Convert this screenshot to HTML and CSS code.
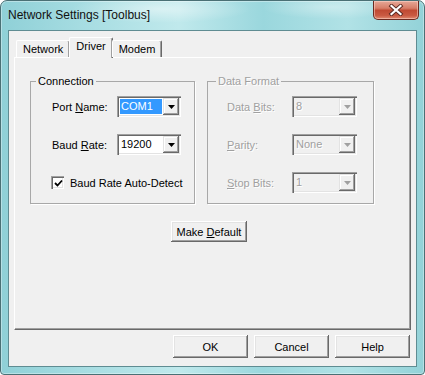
FILE: index.html
```html
<!DOCTYPE html>
<html>
<head>
<meta charset="utf-8">
<link rel="stylesheet" href="styles.css">
</head>
<body>
<div class="window">
  <div class="titlebar">
    <span class="title">Network Settings [Toolbus]</span>
    <div class="close">
      <svg width="16" height="12" viewBox="0 0 16 12"><path d="M3.5 2 L12.5 10 M12.5 2 L3.5 10" stroke="#5a2a22" stroke-width="4" stroke-linecap="square" fill="none"/><path d="M3.5 2 L12.5 10 M12.5 2 L3.5 10" stroke="#fff" stroke-width="2.2" stroke-linecap="square" fill="none"/></svg>
    </div>
  </div>
  <div class="client">
    <div class="tabstrip">
      <div class="tab">Network</div>
      <div class="tab active">Driver</div>
      <div class="tab">Modem</div>
    </div>
    <div class="panel">
      <div class="groups">
        <fieldset class="group conn">
          <legend>Connection</legend>
          <div class="rows">
            <span class="lbl">Port <u>N</u>ame:</span>
            <div class="combo"><span class="val sel">COM1</span><span class="drop"><svg width="7" height="4" viewBox="0 0 7 4"><path d="M0 0H7L3.5 4Z" fill="#000"/></svg></span></div>
            <span class="lbl">Baud <u>R</u>ate:</span>
            <div class="combo"><span class="val">19200</span><span class="drop"><svg width="7" height="4" viewBox="0 0 7 4"><path d="M0 0H7L3.5 4Z" fill="#000"/></svg></span></div>
            <label class="check">
              <span class="box"><svg width="9" height="9" viewBox="0 0 9 9"><path d="M1 4 L3.5 6.5 L8 1.5" stroke="#000" stroke-width="1.8" fill="none"/></svg></span>
              <span class="ctext">Baud Rate Auto-Detect</span>
            </label>
          </div>
        </fieldset>
        <fieldset class="group fmt disabled">
          <legend>Data Format</legend>
          <div class="rows">
            <span class="lbl">Data <u>B</u>its:</span>
            <div class="combo"><span class="val">8</span><span class="drop"><svg width="7" height="4" viewBox="0 0 7 4"><path d="M0 0H7L3.5 4Z" fill="#a0a0a0"/></svg></span></div>
            <span class="lbl"><u>P</u>arity:</span>
            <div class="combo"><span class="val">None</span><span class="drop"><svg width="7" height="4" viewBox="0 0 7 4"><path d="M0 0H7L3.5 4Z" fill="#a0a0a0"/></svg></span></div>
            <span class="lbl"><u>S</u>top Bits:</span>
            <div class="combo"><span class="val">1</span><span class="drop"><svg width="7" height="4" viewBox="0 0 7 4"><path d="M0 0H7L3.5 4Z" fill="#a0a0a0"/></svg></span></div>
          </div>
        </fieldset>
      </div>
      <div class="make"><button class="btn wide">Make <u>D</u>efault</button></div>
    </div>
    <div class="buttons">
      <button class="btn">OK</button>
      <button class="btn">Cancel</button>
      <button class="btn">Help</button>
    </div>
  </div>
</div>
</body>
</html>
```
FILE: styles.css
```css
html, body {
  margin: 0;
  padding: 0;
}
body {
  width: 425px;
  height: 375px;
  overflow: hidden;
  background: #fff;
  font-family: "Liberation Sans", Arial, sans-serif;
  font-size: 11px;
  color: #000;
}
.window {
  width: 425px;
  height: 375px;
  box-sizing: border-box;
  border: 1px solid #4a7075;
  border-radius: 7px 7px 4px 4px;
  background:
    radial-gradient(ellipse 90px 14px at 160px 8px, rgba(255,255,255,0.45), rgba(255,255,255,0) 100%),
    radial-gradient(ellipse 70px 12px at 330px 6px, rgba(255,255,255,0.35), rgba(255,255,255,0) 100%),
    linear-gradient(to right, #8fd0d7 0%, #a7dde2 20%, #c0e9ec 42%, #9ad7dd 62%, #b1e2e6 82%, #93d2d8 100%);
  display: flex;
  flex-direction: column;
  box-shadow: inset 0 0 0 1px rgba(255,255,255,0.35);
}
.titlebar {
  height: 29px;
  flex: none;
  display: flex;
  justify-content: space-between;
  align-items: flex-start;
  padding-left: 7px;
}
.title {
  margin-top: 7px;
  font-size: 12px;
  color: #111;
}
.close {
  width: 46px;
  height: 19px;
  box-sizing: border-box;
  margin-right: 5px;
  border: 1px solid #6b2a20;
  border-top: none;
  border-radius: 0 0 5px 5px;
  background: linear-gradient(#e6a898 0%, #d77e68 40%, #c04a33 52%, #c95a42 80%, #e08a70 100%);
  display: flex;
  align-items: center;
  justify-content: center;
  box-shadow: inset 0 0 0 1px rgba(255,220,210,0.5);
}
.client {
  flex: 1;
  margin: 0 7px 7px;
  border: 1px solid #5f8c92;
  background: #f0f0f0;
  padding: 6px 6px 8px 5px;
  display: flex;
  flex-direction: column;
}
.tabstrip {
  height: 20px;
  flex: none;
  display: flex;
  align-items: flex-end;
  padding-left: 2px;
  position: relative;
  z-index: 1;
}
.tab {
  height: 17px;
  box-sizing: border-box;
  padding: 2px 6px 0 6px;
  border-top: 1px solid #fff;
  border-left: 1px solid #fff;
  border-right: 1px solid #696969;
  border-radius: 2px 2px 0 0;
  box-shadow: inset -1px 0 #a0a0a0;
  background: #f0f0f0;
  line-height: 13px;
}
.tab.active {
  height: 21px;
  margin-bottom: -1px;
  padding-top: 2px;
  padding-bottom: 4px;
  margin-left: -1px;
  margin-right: -1px;
}
.panel {
  flex: 1;
  box-sizing: border-box;
  border-top: 1px solid #fff;
  border-left: 1px solid #fff;
  border-right: 1px solid #696969;
  border-bottom: 1px solid #696969;
  box-shadow: inset -1px -1px #a0a0a0;
  display: flex;
  flex-direction: column;
  margin-right: -1px;
}
.groups {
  display: flex;
  gap: 12px;
  margin: 17px 0 0 15px;
}
.group {
  margin: 0;
  padding: 0;
  border: 1px solid #a8a8a8;
  box-shadow: 1px 1px 0 #fff;
  height: 129px;
  box-sizing: border-box;
  min-width: 0;
}
.group legend {
  padding: 0 2px;
  line-height: 13px;
}
.conn {
  width: 165px;
}
.conn legend {
  margin-left: 5px;
}
.fmt {
  width: 167px;
}
.fmt legend {
  margin-left: 8px;
}
.rows {
  display: grid;
  grid-template-columns: 65px 64px;
  grid-auto-rows: 21px;
  row-gap: 17px;
  align-items: center;
  padding: 8px 0 0 21px;
}
.fmt .rows {
  grid-template-columns: 65px 65px;
  padding-left: 19px;
}
.disabled .lbl,
.disabled legend,
.disabled .val {
  color: #a0a0a0;
  text-shadow: 1px 1px 0 #fff;
}
.combo {
  height: 21px;
  box-sizing: border-box;
  background: #fff;
  box-shadow: inset 1px 1px #a0a0a0, inset 2px 2px #696969, inset -1px -1px #fff, inset -2px -2px #e3e3e3;
  display: flex;
  padding: 2px;
}
.disabled .combo {
  background: #f0f0f0;
}
.val {
  flex: 1;
  margin: 1px;
  padding-left: 1px;
  line-height: 15px;
  font-size: 11px;
}
.val.sel {
  background: #3399ff;
  color: #fff;
}
.drop {
  width: 16px;
  height: 17px;
  box-sizing: border-box;
  background: #f0f0f0;
  box-shadow: inset -1px -1px #696969, inset 1px 1px #e3e3e3, inset -2px -2px #a0a0a0, inset 2px 2px #fff;
  display: flex;
  align-items: center;
  justify-content: center;
}
.check {
  grid-column: 1 / span 2;
  display: flex;
  align-items: center;
  gap: 6px;
  margin-left: -1px;
  height: 13px;
  white-space: nowrap;
}
.box {
  width: 13px;
  height: 13px;
  flex: none;
  box-sizing: border-box;
  background: #fff;
  box-shadow: inset 1px 1px #a0a0a0, inset 2px 2px #696969, inset -1px -1px #fff, inset -2px -2px #e3e3e3;
  display: flex;
  align-items: center;
  justify-content: center;
  padding: 1px 0 0 1px;
}
.make {
  margin: 17px 0 0 156px;
}
.btn {
  width: 75px;
  height: 23px;
  box-sizing: border-box;
  border: none;
  margin: 0;
  padding: 0;
  background: #f0f0f0;
  font-family: "Liberation Sans", Arial, sans-serif;
  font-size: 11px;
  color: #000;
  box-shadow: inset -1px -1px #696969, inset 1px 1px #fff, inset -2px -2px #a0a0a0, inset 2px 2px #e3e3e3;
}
.btn.wide {
  width: 76px;
  height: 21px;
}
.buttons {
  flex: none;
  display: flex;
  justify-content: flex-end;
  gap: 6px;
  margin-top: 5px;
  padding-right: 0;
}
```
